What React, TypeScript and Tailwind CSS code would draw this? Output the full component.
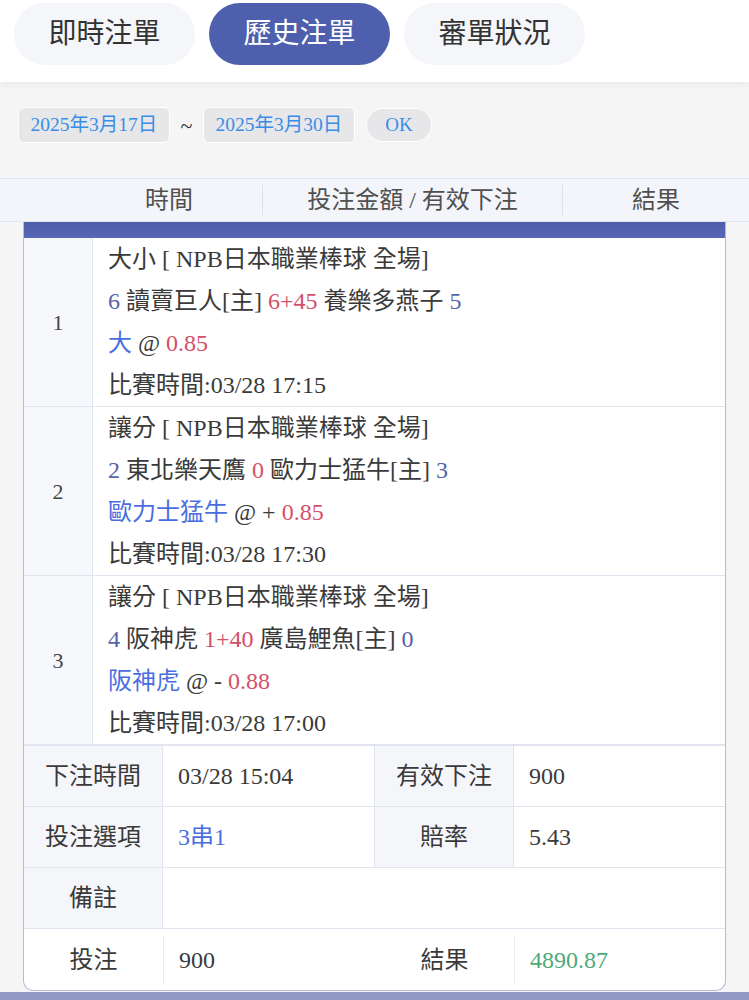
import React from "react";

const F = { fontFamily: '"Liberation Serif", "Noto Sans CJK TC", serif' };

const B = ({ children }: { children: React.ReactNode }) => (
  <span className="text-[#5464a8]">{children}</span>
);
const R = ({ children }: { children: React.ReactNode }) => (
  <span className="text-[#d4506a]">{children}</span>
);
const L = ({ children }: { children: React.ReactNode }) => (
  <span className="text-[#4a6ee0]">{children}</span>
);

function BetRow({ n, lines, last }: { n: string; lines: React.ReactNode[]; last?: boolean }) {
  return (
    <div className={`flex ${last ? "" : "border-b"} border-[#e2e5f0]`}>
      <div className="w-[69px] shrink-0 bg-[#f7f8fc] border-r border-[#e2e5f0] flex items-center justify-center text-[22px] text-[#444]">
        {n}
      </div>
      <div className="flex-1 pl-[15px] text-[24px] leading-[42px] text-[#3a3a3a] h-[168px]">
        {lines.map((l, i) => (
          <div key={i} className="whitespace-nowrap">{l}</div>
        ))}
      </div>
    </div>
  );
}

export default function App() {
  return (
    <div className="w-[749px] h-[1000px] overflow-hidden bg-[#f5f5f6]" style={F}>
      {/* top tabs */}
      <div className="h-[82px] bg-white shadow-[0_2px_8px_rgba(0,0,0,0.06)] flex gap-[14px] pl-[14px] pt-[3px] relative z-10">
        <div className="w-[181px] h-[62px] rounded-full bg-[#f5f6fa] flex items-center justify-center text-[28px] text-[#333]">即時注單</div>
        <div className="w-[181px] h-[62px] rounded-full bg-[#4e5fad] flex items-center justify-center text-[28px] text-white">歷史注單</div>
        <div className="w-[181px] h-[62px] rounded-full bg-[#f5f6fa] flex items-center justify-center text-[28px] text-[#333]">審單狀況</div>
      </div>

      {/* date row */}
      <div className="flex pl-[18px] pt-[25px] h-[96px] items-start">
        <div className="flex items-center h-[36px]">
          <div className="h-[36px] w-[152px] rounded-md bg-[#e7e7e9] border border-white flex items-center justify-center text-[19.5px] text-[#3a8de6]">2025年3月17日</div>
          <div className="w-[33px] flex justify-center text-[22px] text-[#333]">~</div>
          <div className="h-[36px] w-[152px] rounded-md bg-[#e7e7e9] border border-white flex items-center justify-center text-[19.5px] text-[#3a8de6]">2025年3月30日</div>
          <div className="ml-[11px] h-[34px] w-[66px] rounded-full bg-[#e7e7e9] border border-white flex items-center justify-center text-[19px] text-[#3a8de6]">OK</div>
        </div>
      </div>

      {/* header */}
      <div className="h-[44px] bg-[#f3f5fb] border-t border-b border-[#e1e5f0] flex items-center text-[24px] text-[#505050]">
        <div className="w-[262px] flex justify-center pl-[76px]">時間</div>
        <div className="w-[1px] h-[30px] bg-[#dde0ea]"></div>
        <div className="w-[299px] flex justify-center">投注金額 / 有效下注</div>
        <div className="w-[1px] h-[30px] bg-[#dde0ea]"></div>
        <div className="flex-1 flex justify-center">結果</div>
      </div>

      {/* card */}
      <div className="mx-[23px] w-[703px] bg-white border-[1.5px] border-t-0 border-[#b4b9d6] rounded-b-[10px] overflow-hidden">
        <div className="h-[16px] bg-gradient-to-b from-[#4d5daa] to-[#5868b6]"></div>
        <BetRow
          n="1"
          lines={[
            <>大小 [ NPB日本職業棒球 全場]</>,
            <><B>6</B> 讀賣巨人[主] <R>6+45</R> 養樂多燕子 <B>5</B></>,
            <><L>大</L> @ <R>0.85</R></>,
            <>比賽時間:03/28 17:15</>,
          ]}
        />
        <BetRow
          n="2"
          lines={[
            <>讓分 [ NPB日本職業棒球 全場]</>,
            <><B>2</B> 東北樂天鷹 <R>0</R> 歐力士猛牛[主] <B>3</B></>,
            <><L>歐力士猛牛</L> @ + <R>0.85</R></>,
            <>比賽時間:03/28 17:30</>,
          ]}
        />
        <BetRow
          n="3"
          lines={[
            <>讓分 [ NPB日本職業棒球 全場]</>,
            <><B>4</B> 阪神虎 <R>1+40</R> 廣島鯉魚[主] <B>0</B></>,
            <><L>阪神虎</L> @ - <R>0.88</R></>,
            <>比賽時間:03/28 17:00</>,
          ]}
        />

        {/* details */}
        <div className="border-t border-[#e2e5f0] text-[#3a3a3a]">
          <div className="flex h-[61px] border-b border-[#e2e5f0]">
            <div className="w-[139px] bg-[#f5f6fa] border-r border-[#e2e5f0] flex items-center justify-center text-[24px]">下注時間</div>
            <div className="w-[212px] border-r border-[#e2e5f0] flex items-center pl-[15px] text-[24px]">03/28 15:04</div>
            <div className="w-[139px] bg-[#f5f6fa] border-r border-[#e2e5f0] flex items-center justify-center text-[24px]">有效下注</div>
            <div className="flex-1 flex items-center pl-[15px] text-[24px]">900</div>
          </div>
          <div className="flex h-[61px] border-b border-[#e2e5f0]">
            <div className="w-[139px] bg-[#f5f6fa] border-r border-[#e2e5f0] flex items-center justify-center text-[24px]">投注選項</div>
            <div className="w-[212px] border-r border-[#e2e5f0] flex items-center pl-[15px] text-[24px] text-[#4a6ee0]">3串1</div>
            <div className="w-[139px] bg-[#f5f6fa] border-r border-[#e2e5f0] flex items-center justify-center text-[24px]">賠率</div>
            <div className="flex-1 flex items-center pl-[15px] text-[24px]">5.43</div>
          </div>
          <div className="flex h-[61px] border-b border-[#e2e5f0]">
            <div className="w-[139px] bg-[#f5f6fa] border-r border-[#e2e5f0] flex items-center justify-center text-[24px]">備註</div>
            <div className="flex-1"></div>
          </div>
          <div className="flex h-[61px] items-center">
            <div className="w-[139px] flex items-center justify-center text-[24px]">投注</div>
            <div className="w-[1px] h-[46px] bg-[#e8eaf2]"></div>
            <div className="w-[211px] flex items-center pl-[15px] text-[24px]">900</div>
            <div className="w-[139px] flex items-center justify-center text-[24px]">結果</div>
            <div className="w-[1px] h-[46px] bg-[#e8eaf2]"></div>
            <div className="flex-1 flex items-center pl-[15px] text-[24px] text-[#4caa78]">4890.87</div>
          </div>
        </div>
      </div>

      {/* bottom bar */}
      <div className="mt-[1px] h-[50px] bg-[#9199c2] flex items-start pt-[6px] text-[24px] text-white">
        <div className="w-[375px] flex justify-center">投注</div>
        <div className="flex-1 flex justify-center pr-[40px]">結果</div>
      </div>
    </div>
  );
}
